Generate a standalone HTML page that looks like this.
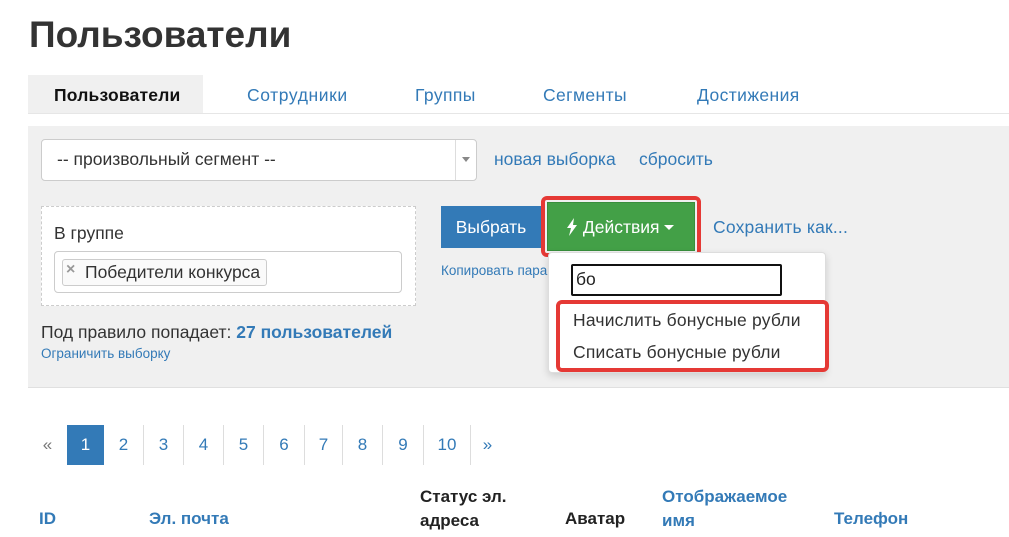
<!DOCTYPE html>
<html><head><meta charset="utf-8"><style>
*{box-sizing:border-box;margin:0;padding:0}
body{width:1009px;height:537px;overflow:hidden;background:#fff;font-family:"Liberation Sans",sans-serif;color:#333;position:relative}
.a{position:absolute;white-space:nowrap}
.blue{color:#337ab7}
</style></head><body>
<div class="a" style="left:29px;top:14px;font-size:37px;font-weight:bold;color:#333">Пользователи</div>

<div class="a" style="left:28px;top:75px;width:175px;height:38px;background:#f0f0f0"></div>
<div class="a" style="left:28px;top:113px;width:981px;height:1px;background:#e6e6e6"></div>
<div class="a" style="left:54px;top:85px;font-size:17.5px;font-weight:bold;color:#111;letter-spacing:.2px">Пользователи</div>
<div class="a blue" style="left:247px;top:85px;font-size:17.5px;letter-spacing:.6px">Сотрудники</div>
<div class="a blue" style="left:415px;top:85px;font-size:17.5px;letter-spacing:.4px">Группы</div>
<div class="a blue" style="left:543px;top:85px;font-size:17.5px;letter-spacing:.4px">Сегменты</div>
<div class="a blue" style="left:697px;top:85px;font-size:17.5px;letter-spacing:.4px">Достижения</div>

<div class="a" style="left:28px;top:126px;width:981px;height:262px;background:#f0f0f0;border-bottom:1px solid #e0e0e0"></div>

<div class="a" style="left:41px;top:139px;width:436px;height:42px;background:#fff;border:1px solid #ccc;border-radius:4px"></div>
<div class="a" style="left:455px;top:140px;width:1px;height:40px;background:#ddd"></div>
<div class="a" style="left:462px;top:157px;width:0;height:0;border-left:4px solid transparent;border-right:4px solid transparent;border-top:5px solid #888"></div>
<div class="a" style="left:57px;top:149px;font-size:17.5px;color:#333">-- произвольный сегмент --</div>
<div class="a blue" style="left:494px;top:149px;font-size:17.5px">новая выборка</div>
<div class="a blue" style="left:639px;top:149px;font-size:17.5px">сбросить</div>

<div class="a" style="left:41px;top:206px;width:375px;height:100px;background:#fff;border:1px dashed #ccc"></div>
<div class="a" style="left:54px;top:223px;font-size:17.5px;color:#333">В группе</div>
<div class="a" style="left:54px;top:251px;width:348px;height:42px;background:#fff;border:1px solid #ccc;border-radius:4px"></div>
<div class="a" style="left:62px;top:259px;width:205px;height:27px;background:#fafafa;border:1px solid #ccc;border-radius:3px"></div>
<div class="a" style="left:66px;top:261px;font-size:16px;color:#999;font-weight:bold">×</div>
<div class="a" style="left:85px;top:262px;font-size:17.5px;color:#333">Победители конкурса</div>

<div class="a" style="left:41px;top:322px;font-size:17.5px;color:#333">Под правило попадает: <b class="blue">27 пользователей</b></div>
<div class="a blue" style="left:41px;top:346px;font-size:13.5px">Ограничить выборку</div>

<div class="a" style="left:441px;top:206px;width:100px;height:42px;background:#337ab7;color:#fff;font-size:17.5px;line-height:42px;text-align:center">Выбрать</div>
<div class="a" style="left:541px;top:196px;width:160px;height:61px;border:4px solid #e53935;border-radius:6px"></div>
<div class="a" style="left:547px;top:202px;width:148px;height:49px;background:#43a047;border:1px solid #388e3c;color:#fff;font-size:17.5px;line-height:48px;padding-left:18px">
<svg width="12" height="18" viewBox="0 0 12 18" style="vertical-align:-3px"><path d="M8 0L1 10h4l-2 8 8-11H7z" fill="#fff"/></svg> Действия <span style="display:inline-block;width:0;height:0;border-left:5px solid transparent;border-right:5px solid transparent;border-top:5px solid #fff;vertical-align:3px"></span></div>
<div class="a blue" style="left:713px;top:217px;font-size:17.5px;letter-spacing:.2px">Сохранить как...</div>
<div class="a blue" style="left:441px;top:263px;font-size:13.5px">Копировать пара</div>

<div class="a" style="left:548px;top:252px;width:278px;height:121px;background:#fff;border:1px solid #ddd;border-radius:4px;box-shadow:0 3px 8px rgba(0,0,0,.15)"></div>
<div class="a" style="left:571px;top:264px;width:211px;height:32px;border:2px solid #111;border-radius:2px;background:#fff"></div>
<div class="a" style="left:576px;top:269px;font-size:17.5px;color:#222">бо</div>
<div class="a" style="left:556px;top:300px;width:273px;height:72px;border:4px solid #e53935;border-radius:6px"></div>
<div class="a" style="left:573px;top:310px;font-size:17.5px;color:#333;letter-spacing:.2px">Начислить бонусные рубли</div>
<div class="a" style="left:573px;top:342px;font-size:17.5px;color:#333;letter-spacing:.2px">Списать бонусные рубли</div>

<div class="a" style="left:28px;top:425px;width:476px;height:40px;font-size:17px">
<div class="a" style="left:0;top:0;width:39px;height:40px;line-height:40px;text-align:center;color:#777">«</div>
<div class="a" style="left:39px;top:0;width:37px;height:40px;line-height:40px;text-align:center;background:#337ab7;color:#fff">1</div>
<div class="a blue" style="left:76px;width:40px;height:40px;line-height:40px;text-align:center;border-right:1px solid #ddd">2</div>
<div class="a blue" style="left:116px;width:40px;height:40px;line-height:40px;text-align:center;border-right:1px solid #ddd">3</div>
<div class="a blue" style="left:156px;width:40px;height:40px;line-height:40px;text-align:center;border-right:1px solid #ddd">4</div>
<div class="a blue" style="left:196px;width:40px;height:40px;line-height:40px;text-align:center;border-right:1px solid #ddd">5</div>
<div class="a blue" style="left:236px;width:41px;height:40px;line-height:40px;text-align:center;border-right:1px solid #ddd">6</div>
<div class="a blue" style="left:277px;width:38px;height:40px;line-height:40px;text-align:center;border-right:1px solid #ddd">7</div>
<div class="a blue" style="left:315px;width:40px;height:40px;line-height:40px;text-align:center;border-right:1px solid #ddd">8</div>
<div class="a blue" style="left:355px;width:41px;height:40px;line-height:40px;text-align:center;border-right:1px solid #ddd">9</div>
<div class="a blue" style="left:396px;width:47px;height:40px;line-height:40px;text-align:center;border-right:1px solid #ddd">10</div>
<div class="a blue" style="left:443px;width:33px;height:40px;line-height:40px;text-align:center">»</div>
</div>

<div class="a blue" style="left:39px;top:509px;font-size:17px;font-weight:bold">ID</div>
<div class="a blue" style="left:149px;top:509px;font-size:17px;font-weight:bold">Эл. почта</div>
<div class="a" style="left:420px;top:485px;font-size:17px;font-weight:bold;color:#222;line-height:24px">Статус эл.<br>адреса</div>
<div class="a" style="left:565px;top:509px;font-size:17px;font-weight:bold;color:#222">Аватар</div>
<div class="a blue" style="left:662px;top:485px;font-size:17px;font-weight:bold;line-height:24px">Отображаемое<br>имя</div>
<div class="a blue" style="left:834px;top:509px;font-size:17px;font-weight:bold">Телефон</div>
</body></html>
